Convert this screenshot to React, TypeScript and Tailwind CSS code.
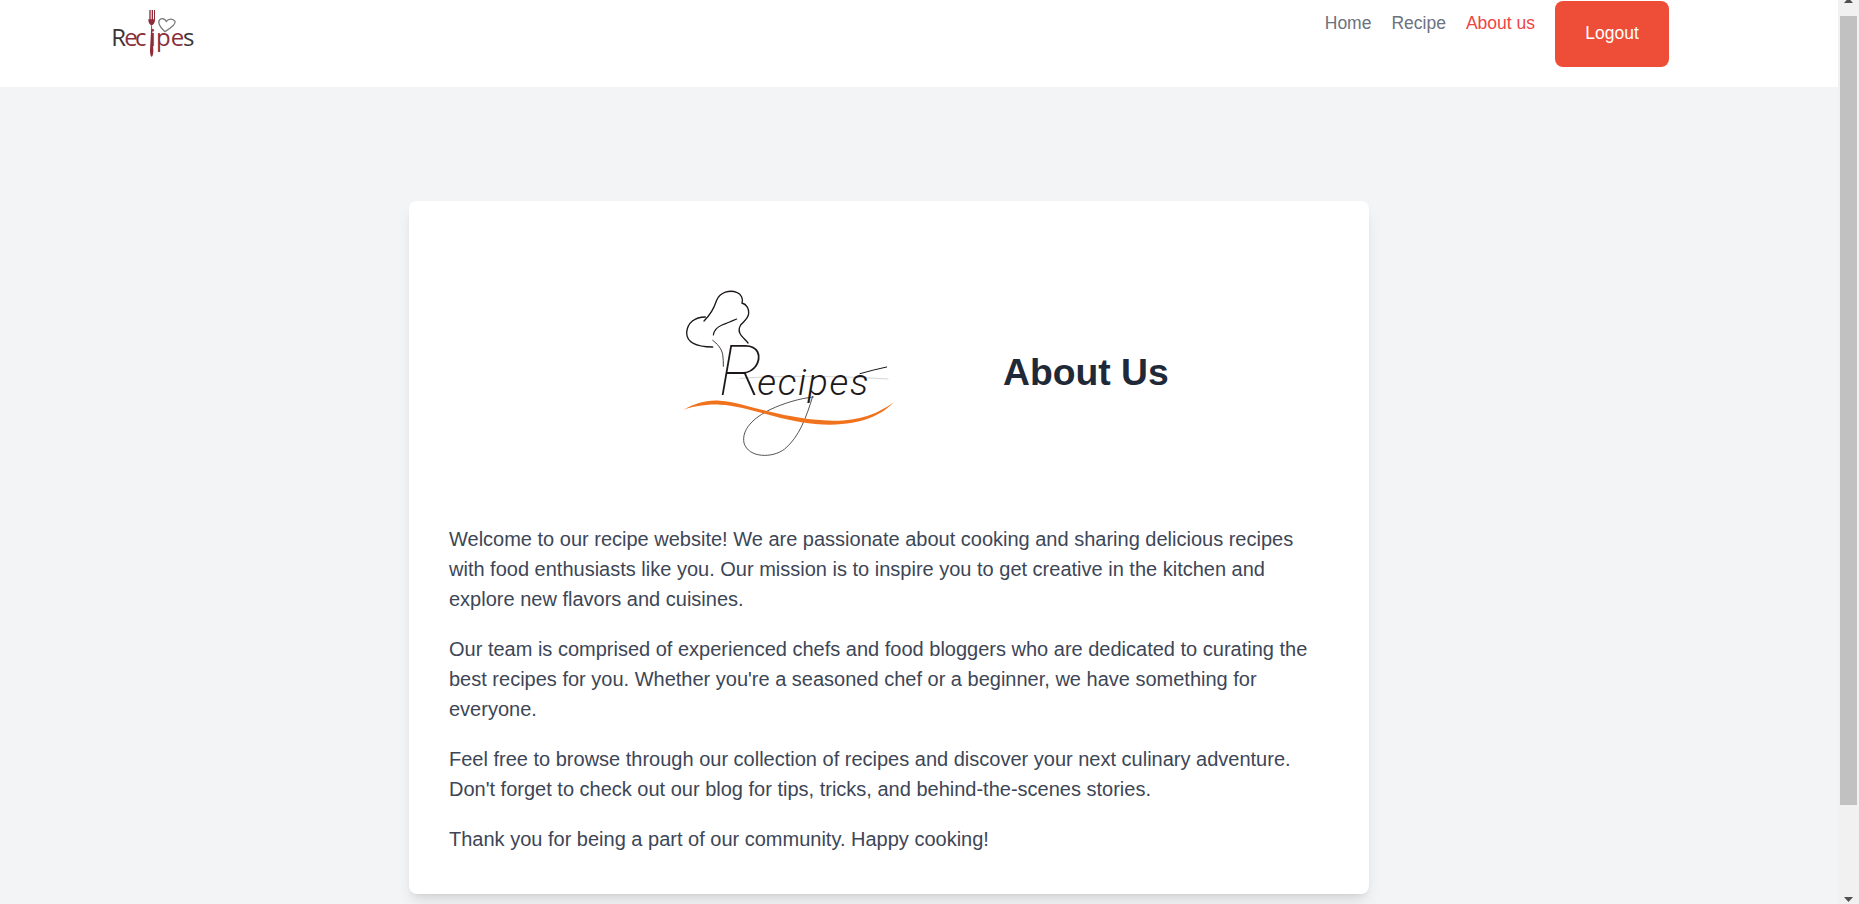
const arial = { fontFamily: '"Liberation Sans", Arial, sans-serif' }

const SmallLogo = () => (
  <svg width="130" height="70" viewBox="0 0 390 210" className="block">
    <text y="137" fontFamily="Open Sans, sans-serif" fontSize="72" fill="#3a3335">
      <tspan x="64">R</tspan>
      <tspan x="103 135" fill="#8a2f3a">ec</tspan>
      <tspan x="179" fill="#8a2f3a">i</tspan>
      <tspan x="198 242" fill="#8a2f3a">pe</tspan>
      <tspan x="279">s</tspan>
    </text>
    <path d="M175 30v30c0 8 4 13 9 16l-4 74c0 12 2 20 5 20s5-8 5-20l-4-74c5-3 9-8 9-16V30h-3v28h-3V30h-4v28h-3V30h-4v28h-3V30z" fill="#8e2c3a" />
    <path d="M207 62c6-10 18-6 22 2 6-8 20-10 26 0 3 8-12 20-30 31-8-8-22-18-18-33z" fill="none" stroke="#7c7c7c" strokeWidth="4" />
  </svg>
)

const BigLogo = () => (
  <svg width="260" height="200" viewBox="0 0 780 600" className="block mb-[3px] shrink-0">
    <g fill="none" stroke="#1c1718" strokeLinecap="round">
      <path d="M136 138C105 138 82 155 80 185c0 25 25 42 78 43" strokeWidth="4" />
      <path d="M132 150c16-15 30-38 38-62 10-25 40-32 60-24 14 5 20 20 16 32 14 4 22 18 20 32-2 16-14 22-24 34-6 10-6 22 2 32 6 8 14 14 20 22" strokeWidth="4" />
      <path d="M160 192c2-14 12-24 26-30 16-6 30-12 44-18" strokeWidth="3.500" />
      <path d="M158 208c14 10 26 24 30 42 2 12 2 24 2 36" strokeWidth="2.500" />
      <path d="M458 376c-18 60-40 122-84 158-36 28-108 28-122-18-8-42 30-76 78-100 42-20 90-34 130-38" strokeWidth="2.500" stroke="#333333" />
      <path d="M240 322c140-10 320-6 444 2" strokeWidth="1.500" stroke="#a8a8a8" />
      <path d="M600 308c26-8 54-14 80-20" strokeWidth="3" />
    </g>
    <text y="372" fontFamily="Roboto, sans-serif" fontStyle="italic" fill="#1c1718">
      <tspan x="176" fontSize="212" fontWeight="100">R</tspan>
      <tspan x="292" fontSize="112" fontWeight="300" letterSpacing="5">ecipes</tspan>
    </text>
    <path d="M68 418C105 396 140 386 180 389c50 4 100 22 170 38 60 14 120 22 170 22 80 0 130-20 180-54-36 36-90 64-190 66-60 0-110-10-170-26-60-16-110-32-160-34-40-2-90 6-112 17z" fill="#f0721c" />
  </svg>
)

const App = () => {
  return (
    <div className="flex h-[904px] overflow-hidden bg-[#f3f4f6]" style={arial}>
      <div className="flex-1 min-w-0">
        <nav className="h-[87px] bg-white flex justify-between pl-[90px] pr-[169px]">
          <SmallLogo />
          <div className="flex items-start h-[68px] pt-px text-[17.5px] leading-6">
            <a className="mt-[10px] text-[#6b7280]">Home</a>
            <a className="mt-[10px] ml-5 text-[#6b7280]">Recipe</a>
            <a className="mt-[10px] ml-5 text-[#ef4444]">About us</a>
            <button className="ml-5 w-[114px] h-[66px] pb-[2px] rounded-lg bg-[#ee4d38] text-white">Logout</button>
          </div>
        </nav>
        <main className="pl-[409px] pt-[114px]">
          <div className="w-[960px] bg-white rounded-lg shadow-lg p-10">
            <div className="flex items-center pl-[211px] h-[263px] mb-5">
              <BigLogo />
              <h1 className="ml-[83px] text-[37.3px] font-bold text-[#1f2937]">About Us</h1>
            </div>
            <div className="text-xl leading-[30px] text-[#3d4656]">
              <p className="mb-5">Welcome to our recipe website! We are passionate about cooking and sharing delicious recipes with food enthusiasts like you. Our mission is to inspire you to get creative in the kitchen and explore new flavors and cuisines.</p>
              <p className="mb-5">Our team is comprised of experienced chefs and food bloggers who are dedicated to curating the best recipes for you. Whether you're a seasoned chef or a beginner, we have something for everyone.</p>
              <p className="mb-5">Feel free to browse through our collection of recipes and discover your next culinary adventure. Don't forget to check out our blog for tips, tricks, and behind-the-scenes stories.</p>
              <p>Thank you for being a part of our community. Happy cooking!</p>
            </div>
          </div>
        </main>
      </div>
      <div className="w-[21px] shrink-0 bg-[#f1f1f1] flex flex-col items-center justify-between relative">
        <div className="absolute top-[16px] left-[2px] w-[17px] h-[789px] bg-[#c1c1c1]" />
        <svg width="9" height="5" viewBox="0 0 9 5" className="mt-[-2px]"><path d="M4.500 0L9 5H0z" fill="#505050" /></svg>
        <svg width="9" height="5" viewBox="0 0 9 5" className="mb-[2px]"><path d="M4.500 5L9 0H0z" fill="#505050" /></svg>
      </div>
    </div>
  )
}

export default App
